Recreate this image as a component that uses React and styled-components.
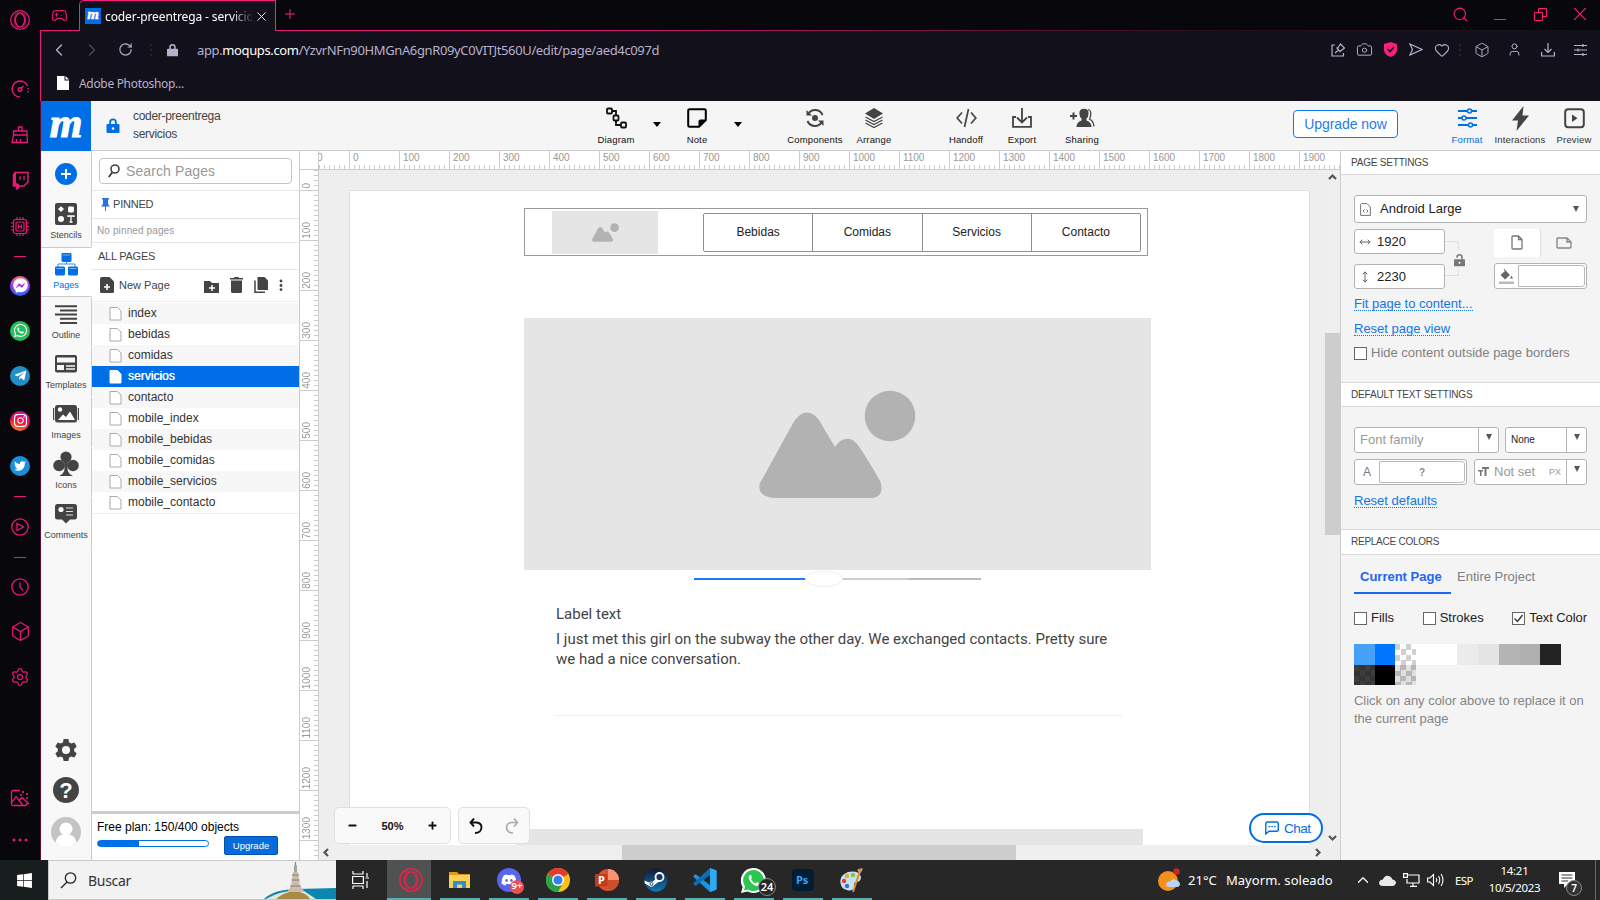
import React from "react";
import styled, { createGlobalStyle, css } from "styled-components";
import {
  Gamepad2, X, Plus, ChevronLeft, ChevronRight, RotateCw, Search, Camera, Heart, Box, User,
  Settings, Minus, MoveHorizontal, MoveVertical, ChevronUp,
} from "lucide-react";
import {
  FaTwitter, FaTelegramPlane, FaInstagram, FaWhatsapp, FaFacebookMessenger, FaDiscord, FaWindows,
} from "react-icons/fa";

const C = {
  pink: "#e8197a",
  hot: "#fa1e7d",
  blue: "#006ee6",
  dark: "#444",
  line: "#ccc",
  lilac: "#b9b0cc",
};

const Global = createGlobalStyle`
  * { box-sizing: border-box; }
  html, body { margin: 0; padding: 0; overflow: hidden; }
  body { font-family: "Liberation Sans", Arial, sans-serif; font-size: 12px; color: #333; }
  svg { display: block; flex: none; }
`;

/* ---------- Desktop and browser ---------- */
const Desktop = styled.div`
  width: 1600px; height: 900px; display: flex; flex-direction: column; overflow: hidden; background: #07070c;
`;
const Browser = styled.div`height: 860px; display: flex;`;
const Rail = styled.div`
  width: 40px; display: flex; flex-direction: column; background: #07070c; color: ${C.pink};
`;
const RailSlot = styled.div`
  height: ${(p) => p.$h}px; margin-top: ${(p) => p.$gap || "0"}; display: flex; align-items: center; justify-content: center;
`;
const Dash = styled.div`width: 12px; height: 1px; background: ${C.pink};`;
const Disc = styled.div`
  width: 20px; height: 20px; border-radius: 50%; background: ${(p) => p.$bg}; color: #fff;
  display: flex; align-items: center; justify-content: center;
`;
const Win = styled.div`width: 1560px; display: flex; flex-direction: column;`;
const TabStrip = styled.div`
  height: 31px; display: flex; align-items: stretch; background: #07070c; color: ${C.hot};
`;
const StripSide = styled.div`
  display: flex; align-items: center; border-bottom: 1px solid ${C.pink};
  ${(p) => (p.$grow ? css`flex: 1; border-image: linear-gradient(to right, #e01b74 0, #e01b74 20%, #2a1020 70%, #14111c 100%) 1;` : css`width: 39px; justify-content: center;`)}
  padding: ${(p) => p.$pad || 0};
`;
const Tab = styled.div`
  width: 197px; display: flex; align-items: center; padding: 0 7px 0 5px; background: #12101a; color: #fff;
  border: 1px solid ${C.hot}; border-bottom: 0; border-top-left-radius: 5px; font-family: "Noto Sans", sans-serif;
`;
const Favicon = styled.div`
  width: 16px; height: 16px; background: ${C.blue}; color: #fff; flex: none;
  font: italic bold 15px/12px "Liberation Serif", serif; text-align: center; -webkit-text-stroke: 0.5px #fff;
`;
const TabTitle = styled.div`
  width: 147px; margin: 1px 2px 0 4px; white-space: nowrap; font-size: 12px; letter-spacing: -0.12px; flex: none;
  mask-image: linear-gradient(to right, #000 125px, transparent 150px);
`;
const WinButtons = styled.div`margin-left: auto; display: flex; align-items: center; height: 30px;`;
const WinBtn = styled.div`width: 40px; display: flex; justify-content: center;`;
const Chrome = styled.div`
  height: 70px; background: #12101a; color: ${C.lilac}; border-left: 1px solid ${C.pink};
  font-family: "Noto Sans", sans-serif;
`;
const AddressRow = styled.div`height: 37px; display: flex; align-items: center; padding-left: 9px;`;
const NavSlot = styled.div`
  width: ${(p) => p.$w || 33}px; display: flex; justify-content: center; opacity: ${(p) => (p.$dim ? 0.35 : 1)};
`;
const Url = styled.div`
  width: 540px; margin-left: 19px; font-size: 13px; letter-spacing: -0.37px; white-space: nowrap; b { font-weight: 400; color: #fff; }
`;
const AddressIcons = styled.div`margin-left: auto; display: flex; align-items: center; padding-right: 3px;`;
const BookmarkRow = styled.div`
  height: 30px; display: flex; align-items: center; padding: 0 0 0 16px; gap: 10px; font-size: 12px; letter-spacing: -0.32px;
`;

/* ---------- Moqups application ---------- */
const AppShell = styled.div`
  height: 759px; display: flex; flex-direction: column; border-left: 1px solid #5a0d33; background: #f5f5f5;
`;
const Header = styled.div`height: 50px; display: flex; background: #f5f5f5;`;
const Logo = styled.div`
  width: 50px; height: 50px; background: ${C.blue}; color: #fff; text-align: center;
  font: italic bold 42px/44px "Liberation Serif", serif; -webkit-text-stroke: 1.1px #fff;
`;
const HeaderBar = styled.div`flex: 1; display: flex; align-items: stretch; border-bottom: 1px solid ${C.line};`;
const LockSlot = styled.div`width: 42px; display: flex; align-items: center; justify-content: center; padding-left: 1px;`;
const DocName = styled.div`width: 100px; padding-top: 6px; line-height: 18px; color: ${C.dark}; letter-spacing: -0.3px; white-space: nowrap;`;
const Tool = styled.div`
  width: ${(p) => p.$w || 50}px; margin-left: ${(p) => p.$ml || 0}px; display: flex; flex-direction: column; align-items: center;
  color: ${(p) => p.$c || "#444"}; font-size: 9.5px; white-space: nowrap;
`;
const ToolIcon = styled.div`height: 34px; display: flex; align-items: center; justify-content: center;`;
const ToolLabel = styled.div`line-height: 10px; color: ${(p) => p.$c || "#111"}; letter-spacing: ${(p) => p.$ls || 0.15}px;`;
const Caret = styled.div`
  width: 8px; height: 0; margin: 21px 0 0 ${(p) => p.$ml}px; border: 4px solid transparent; border-top: 5px solid #000; border-bottom: 0;
`;
const UpgradeNow = styled.div`
  width: 105px; height: 28px; margin: 9px 0 0 186px; border: 1px solid #0a7af5; border-radius: 4px; background: #fff;
  color: #1f7bf0; font-size: 14px; line-height: 27px; text-align: center; white-space: nowrap; letter-spacing: -0.05px;
`;
const Body = styled.div`height: 709px; display: flex;`;

const Toolbox = styled.div`
  width: 51px; background: #f8f8f8; display: flex; flex-direction: column; color: ${C.dark};
`;
const AddSlot = styled.div`
  height: 46px; border-right: 1px solid ${C.line}; display: flex; justify-content: center; align-items: center; padding-bottom: 1px;
`;
const ToolboxItem = styled.div`
  height: 50px; display: flex; flex-direction: column; align-items: center; font-size: 9px; color: ${(p) => (p.$on ? C.blue : "#444")};
  background: ${(p) => (p.$on ? "#fff" : "transparent")};
  border: 1px solid ${(p) => (p.$on ? C.line : "transparent")}; border-left: 0;
  border-right-color: ${(p) => (p.$on ? "#fff" : C.line)};
`;
const ToolboxIcon = styled.div`height: 32px; display: flex; align-items: center; color: ${(p) => (p.$on ? C.blue : C.dark)};`;
const ToolboxLabel = styled.div`line-height: 11px; white-space: nowrap;`;
const ToolboxFoot = styled.div`
  flex: 1; border-right: 1px solid ${C.line}; display: flex; flex-direction: column; justify-content: flex-end; align-items: center;
  padding-bottom: 13px; gap: 14px;
`;
const Help = styled.div`
  width: 26px; height: 26px; margin-top: 2px; border-radius: 50%; background: ${C.dark}; color: #fff; font: bold 22px/27px "Liberation Sans", sans-serif; text-align: center;
`;

const Pages = styled.div`
  width: 208px; background: #fff; border-right: 1px solid ${C.line}; display: flex; flex-direction: column;
`;
const SearchBox = styled.div`
  height: 26px; margin: 7px 7px 6px; border: 1px solid #c4c4c4; border-radius: 4px; display: flex; align-items: center; gap: 6px;
  padding-left: 8px; color: #999; font-size: 14px; letter-spacing: 0.1px;
`;
const Strip = styled.div`
  height: ${(p) => p.$h}px; border-top: 1px solid #e8e8e8; display: flex; align-items: center; padding: 0 0 ${(p) => p.$pb || 0}px ${(p) => p.$pl || 5}px;
  gap: ${(p) => p.$gap || 4}px; font-size: ${(p) => p.$fs || 11}px; color: ${(p) => p.$c || C.dark}; letter-spacing: ${(p) => p.$ls || 0}px; white-space: nowrap;
`;
const PageActions = styled.div`margin-left: auto; display: flex; align-items: center; gap: 11px; padding-right: 16px;`;
const List = styled.div`border-top: 1px solid #eee; border-bottom: 1px solid #eee; padding-top: 1px;`;
const PageRow = styled.div`
  height: 21px; display: flex; align-items: center; gap: 6px; padding-left: 17px; padding-bottom: 1px;
  background: ${(p) => (p.$on ? C.blue : p.$odd ? "#f7f7f7" : "#fff")}; color: ${(p) => (p.$on ? "#fff" : "#333")};
  ${(p) => p.$on && css`text-shadow: 0.3px 0 #fff;`}
`;
const Plan = styled.div`
  height: 49px; margin-top: auto; border-top: 3px solid ${C.line}; padding: 6px 0 0 5px; color: #000; white-space: nowrap; line-height: 14px;
`;
const PlanRow = styled.div`display: flex; padding-right: 21px; justify-content: space-between;`;
const Meter = styled.div`
  width: 112px; height: 7px; margin-top: 6px; border: 1px solid ${C.blue}; border-radius: 4px;
  background: linear-gradient(to right, ${C.blue} 41px, #fff 41px);
`;
const UpgradeBtn = styled.div`
  width: 54px; height: 19px; margin-top: 2px; background: #066cdc; border: 1px solid #0552a8; border-radius: 2px; color: #fff; font-size: 9.5px;
  line-height: 18px; text-align: center;
`;

/* ---------- Canvas ---------- */
const Stage = styled.div`width: 1040px; display: flex; flex-direction: column; background: #eee;`;
const RulerRow = styled.div`height: 19px; display: flex; background: #fff; border-bottom: 1px solid ${C.line};`;
const Corner = styled.div`width: 19px; border-right: 1px solid ${C.line}; flex: none;`;
const HRuler = styled.div`flex: 1; display: flex; overflow: hidden; color: #999; font-size: 10px;`;
const HCell = styled.div`
  width: ${(p) => (p.$lead ? 30 : 50)}px; flex: none; padding-left: ${(p) => (p.$lead ? 0 : 4)}px; line-height: 14px; letter-spacing: -0.1px;
  box-shadow: ${(p) => (p.$lead ? "none" : "inset 1px 0 #ccc")};
  text-indent: ${(p) => (p.$lead ? -2 : 0)}px;
  background: repeating-linear-gradient(to right, #ccc 0 1px, transparent 1px 5px) bottom / 100% 4px no-repeat;
`;
const StageBody = styled.div`height: 690px; display: flex;`;
const VRuler = styled.div`width: 19px; flex: none; border-right: 1px solid ${C.line}; background: #fff; overflow: hidden;`;
const VCell = styled.div`
  height: ${(p) => (p.$lead ? 21 : 50)}px; display: flex; align-items: flex-end; padding: 0 0 2px 1px; color: #999; font-size: 10px;
  box-shadow: inset 0 -1px #ccc;
  background: repeating-linear-gradient(to top, #ccc 0 1px, transparent 1px 5px) right / 4px 100% no-repeat;
`;
const VLabel = styled.span`writing-mode: vertical-rl; transform: rotate(180deg); line-height: 12px;`;
const ViewCol = styled.div`width: 1006px; display: flex; flex-direction: column; flex: none;`;
const View = styled.div`height: 675px; position: relative; overflow: hidden; background: #eee;`;
const Item = styled.div`
  position: absolute; left: ${(p) => p.$x - 319}px; top: ${(p) => p.$y - 170}px; width: ${(p) => p.$w}px; height: ${(p) => p.$h}px;
`;
const Paper = styled(Item)`background: #fff; border: 1px solid #e0e0e0; border-bottom: 0;`;
const Frame = styled(Item)`border: 1px solid #9a9a9a;`;
const Filled = styled(Item)`background: ${(p) => p.$bg || "#e5e5e5"}; display: flex;`;
const NavGroup = styled(Item)`display: flex; border: 1px solid #8f8f8f; border-radius: 2px;`;
const NavCell = styled.div`
  flex: 1; display: flex; align-items: center; justify-content: center; padding-bottom: 2px; color: #222;
  & + & { border-left: 1px solid #8f8f8f; }
`;
const Copyable = styled(Item)`
  font-family: Roboto, sans-serif; font-size: 15px; line-height: 20px; color: #444; white-space: nowrap;
`;
const Thumb = styled(Item)`background: #fff; border: 1px solid #eee; border-radius: 50%;`;
const Floater = styled(Item)`
  background: #f9f9f9; border: 1px solid #e0e0e0; border-radius: 5px; display: flex; align-items: center; justify-content: space-between;
  padding: 0 ${(p) => p.$pad}px; color: #111; font-size: 11px; font-weight: bold;
`;
const Chat = styled(Item)`
  border: 2px solid ${C.blue}; border-radius: 15px; background: #fff; color: ${C.blue}; font-size: 13.5px; display: flex; align-items: center;
  gap: 5px; padding-left: 14px; letter-spacing: -0.5px;
`;
const HScroll = styled.div`height: 15px; display: flex; align-items: center; justify-content: space-between; padding: 0 3px 0 3px; background: linear-gradient(to right, #efefef 303px, #cdcdcd 303px 697px, #efefef 697px); color: #555;`;
const VScroll = styled.div`
  width: 15px; height: 675px; display: flex; flex-direction: column; justify-content: space-between; align-items: center; padding: 3px 0 3px;
  color: #555; background: linear-gradient(to bottom, #efefef 163px, #cdcdcd 163px 365px, #efefef 365px);
`;

/* ---------- Settings panel ---------- */
const Panel = styled.div`width: 260px; flex: none; border-left: 1px solid ${C.line}; background: #f4f4f4; display: flex; flex-direction: column; white-space: nowrap;`;
const PanelHead = styled.div`
  height: ${(p) => p.$h}px; padding: 0 0 ${(p) => p.$pb || 0}px 10px; display: flex; align-items: center; background: #fff; border-bottom: 1px solid #d9d9d9;
  border-top: ${(p) => (p.$top ? "1px solid #d9d9d9" : "0")}; color: ${C.dark}; font-size: 10px; letter-spacing: ${(p) => p.$ls || -0.2}px;
`;
const PanelBody = styled.div`height: ${(p) => p.$h}px; padding: 20px 13px 0;`;
const Field = styled.div`
  width: ${(p) => p.$w}px; height: ${(p) => p.$h || 26}px; border: 1px solid #b3b3b3; border-radius: 3px; background: #fff; display: flex;
  align-items: center; font-size: 13px; color: ${(p) => p.$c || "#222"}; padding-left: ${(p) => p.$pl || 0}px; gap: ${(p) => p.$gap || 0}px;
`;
const FieldText = styled.span`flex: ${(p) => (p.$fixed ? "none" : 1)}; font-size: ${(p) => p.$fs || 13}px; margin-top: -1px;`;
const Drop = styled.div`
  width: 20px; align-self: stretch; display: flex; justify-content: center; padding-top: ${(p) => p.$pt || 7}px;
  border-left: ${(p) => (p.$bare ? "0" : "1px solid #b3b3b3")};
  &::after { content: ""; width: 0; height: 0; border: 3.5px solid transparent; border-top: 6px solid #555; border-bottom: 0; }
`;
const SizeGrid = styled.div`display: flex; margin-top: 6px;`;
const Stack = styled.div`display: flex; flex-direction: column; gap: ${(p) => p.$gap}px;`;
const LinkCol = styled.div`width: 49px; padding-top: 12px;`;
const Orient = styled.div`width: 93px; height: 28px; display: flex;`;
const OrientBtn = styled.div`
  width: 47px; display: flex; align-items: center; justify-content: center; padding-bottom: 1px; background: ${(p) => (p.$on ? "#fff" : "transparent")};
  border-right: ${(p) => (p.$on ? "1px solid #ddd" : "0")};
`;
const Inner = styled.div`
  flex: 1; height: 22px; margin: 0 1px 0 0; border: 1px solid #bbb; border-radius: 0 3px 3px 0; text-align: center; line-height: 22px; font-size: 10px; font-weight: bold; color: #888;
`;
const Link = styled.div`
  width: max-content; margin-top: ${(p) => p.$mt}px; height: 14px; line-height: 14px; font-size: 13px; color: #1274e6; border-bottom: 1px dotted #1274e6;
`;
const CheckRow = styled.div`display: flex; justify-content: space-between; margin-top: ${(p) => p.$mt}px;`;
const Check = styled.div`
  display: flex; gap: 4px; height: 13px; line-height: 11px; font-size: 13px; color: ${(p) => p.$c || "#222"}; letter-spacing: ${(p) => p.$ls || 0}px;
`;
const BoxMark = styled.div`width: 13px; height: 13px; border: 1px solid #666; background: #fff; flex: none;`;
const FieldRow = styled.div`display: flex; justify-content: space-between; margin-top: ${(p) => p.$mt || 0}px;`;
const Tabs = styled.div`display: flex; height: 31px; margin: -12px 0 1px;`;
const PTab = styled.div`
  padding: 0 6px; line-height: 28px; font-size: 13px; color: ${(p) => (p.$on ? "#1a66f5" : "#808080")};
  font-weight: ${(p) => (p.$on ? 700 : 400)}; width: ${(p) => (p.$on ? 97 : 95)}px; border-bottom: 2px solid ${(p) => (p.$on ? "#1a66f5" : "transparent")};
`;
const Swatches = styled.div`display: flex; flex-wrap: wrap; width: 207px; margin-top: 19px;`;
const Swatch = styled.div`
  width: 20.7px; height: ${(p) => p.$h || 21}px; background: ${(p) => p.$bg};
  ${(p) => p.$chk && css`background: repeating-conic-gradient(${p.$chk[0]} 0 25%, ${p.$chk[1]} 0 50%) 0 0 / 11px 11px;`}
`;
const Hint = styled.div`margin-top: 7px; font-size: 13px; line-height: 18px; color: #858585; letter-spacing: -0.02px;`;

/* ---------- Taskbar ---------- */
const Taskbar = styled.div`
  height: 40px; display: flex; align-items: stretch; background: #272727; color: #fff; font-family: "Noto Sans", sans-serif; white-space: nowrap;
`;
const Start = styled.div`width: 48px; background: #181d1e; display: flex; align-items: center; justify-content: center;`;
const SearchBar = styled.div`
  width: 288px; display: flex; align-items: center; background: #f2f2f2; border: 1px solid #c8c8c8; border-right: 0; color: #333; padding-left: 11px;
  gap: 12px;
`;
const SearchText = styled.span`flex: 1; font-size: 14px; letter-spacing: -0.3px; margin-left: -1px;`;
const TaskView = styled.div`width: 51px; display: flex; align-items: center; justify-content: center; padding-right: 3px;`;
const TaskApp = styled.div`
  width: 49px; position: relative; display: flex; align-items: center; justify-content: center; padding-right: 2px;
  &::before { content: ""; position: absolute; top: 0; bottom: 0; left: 0; right: 5px; background: ${(p) => (p.$on ? "#505151" : "transparent")}; }
  &::after { content: ""; position: absolute; bottom: 0; height: 2px; left: ${(p) => (p.$on ? 0 : 4)}px; right: 5px; background: #56b0b3; }
  svg { position: relative; z-index: 1; }
`;
const Badge = styled.div`
  position: absolute; z-index: 2; right: ${(p) => p.$r}px; bottom: ${(p) => p.$b}px; min-width: ${(p) => p.$s}px; height: ${(p) => p.$s}px; padding: 0 1px; border-radius: 10px;
  background: ${(p) => p.$bg}; border: ${(p) => (p.$ring ? "1px solid #888" : "0")}; font-size: ${(p) => p.$fs}px; line-height: ${(p) => p.$s - 2}px; text-align: center; font-weight: 600;
`;
const Tray = styled.div`margin-left: auto; display: flex; align-items: center; font-size: 13px;`;
const TraySlot = styled.div`width: ${(p) => p.$w}px; display: flex; justify-content: center; font-size: 11.5px; letter-spacing: ${(p) => p.$ls || 0}px;`;
const Notice = styled.div`
  width: 52px; height: 40px; padding: 12px 0 0 11px; position: relative;
  &::after { content: ""; position: absolute; right: 4px; top: 0; bottom: 0; width: 1px; background: #666; }
`;
const Weather = styled.div`width: 171px; padding-left: 8px; display: flex; gap: 9px; letter-spacing: 0.06px;`;
const ClockText = styled.div`width: 67px; text-align: center; font-size: 11.5px; line-height: 17px; letter-spacing: -0.32px; padding-bottom: 2px;`;

/* ---------- Drawings ---------- */
const Svg = ({ w, h, vb, children, ...r }) => (
  <svg width={w} height={h || w} viewBox={vb || `0 0 ${w} ${h || w}`} fill="none" stroke="none" {...r}>{children}</svg>
);
const mountainPath = "M1 93C-2 102 5 108 17 108H112C121 108 125 101 121 91C114 78 104 62 98 54C92 46 82 47 76 57L64 37C55 18 42 18 33 35Z";
const Mountains = ({ w, h }) => (
  <Svg w={w} h={h} vb="0 0 157 108">
    <path fill="#b2b2b2" d={mountainPath} />
    <circle cx="131" cy="26" r="25.3" fill="#b2b2b2" />
  </Svg>
);
const Opera = ({ s = 20, c = C.pink }) => (
  <Svg w={s} vb="0 0 20 20" stroke={c} strokeWidth="1.3"><circle cx="10" cy="10" r="9.3" /><ellipse cx="10" cy="10" rx="4.6" ry="7" /><path d="M8 2.3C3 4 3 16 8 17.7M12 2.3C17 4 17 16 12 17.7" strokeWidth=".8" /></Svg>
);
const Lock = ({ w, h, c, hole }) => (
  <Svg w={w} h={h} vb="0 0 13 15"><path d="M3.6 7V4.2a2.9 2.9 0 0 1 5.8 0V7" stroke={c} strokeWidth="1.8" /><rect y="6" width="13" height="9" rx="1" fill={c} />{hole && <circle cx="6.5" cy="10.5" r="1.3" fill={hole} />}</Svg>
);
const Doc = ({ fill = "#fff", stroke = "#aaa" }) => (
  <Svg w={13} h={15}><path d="M1 1.5H8.5L12 5V14H1Z" fill={fill} stroke={stroke} /></Svg>
);
const Chev = ({ d }) => <Svg w={9} stroke="#555" strokeWidth="2.2"><path d={d} /></Svg>;

const stencils = <Svg w={22}><rect width="22" height="22" rx="2" fill="#444" /><path d="M6 3.2 9 6 6 9 3 6Z" fill="#fff" /><rect x="13" y="3.5" width="6" height="6" rx="1.4" fill="#fff" /><circle cx="6" cy="16" r="3" fill="#fff" /><path d="M13 14V13H19V14M16 13V19M14.5 19H17.5" stroke="#fff" strokeWidth="1.3" /></Svg>;
const tree = <Svg w={23} h={24}><g fill={C.blue}><path d="M11.5 9.5V12H3V15M11.5 12H20V15" stroke={C.blue} strokeWidth=".8" fill="none" /><rect x="6.5" y="1" width="10" height="9" rx="1.4" /><rect y="14.5" width="10" height="9" rx="1.4" /><rect x="13" y="14.5" width="10" height="9" rx="1.4" /></g><path d="M8 3H15M1.5 16.5H8.5M14.5 16.5H21.5" stroke="#7bb4f3" /></Svg>;
const outline = <Svg w={22} h={19} stroke="#444" strokeWidth="2"><path d="M0 1.2H22M5 5.4H22M0 9.6H22M5 13.8H22M5 18H22" /></Svg>;
const templates = <Svg w={22} h={18}><rect width="22" height="17.5" rx="2" fill="#444" /><rect x="2" y="2.5" width="18" height="5" fill="#f8f8f8" /><rect x="2" y="10" width="7" height="5" fill="#f8f8f8" /><path d="M11 11H20M11 14H20" stroke="#f8f8f8" strokeWidth="1.5" /></Svg>;
const images = <Svg w={26} h={18}><rect x="2" width="22" height="17.5" rx="2.5" fill="#444" /><path d="M.6 3V15M25.4 3V15" stroke="#444" strokeWidth="1.2" /><circle cx="7" cy="4.5" r="2.2" fill="#fff" /><path d="M5 15 10 9.5 13 12 17 6.5 22 15Z" fill="#fff" /></Svg>;
const club = <Svg w={26} h={26}><g fill="#444"><circle cx="13" cy="6" r="5.6" /><circle cx="6" cy="14.5" r="5.8" /><circle cx="20" cy="14.5" r="5.8" /><path d="M11 9H15L14.5 18Q15 23 20 25H6Q11 23 11.5 18Z" /></g></Svg>;
const comments = <Svg w={22} h={20}><path d="M2.5 0H19.5Q22 0 22 2.5V13Q22 15.5 19.5 15.5H15L11 19.5 7 15.5H2.5Q0 15.5 0 13V2.5Q0 0 2.5 0Z" fill="#444" /><circle cx="6" cy="5.5" r="2.6" fill="#fff" /><path d="M11 4H18M11 7.5H18M11 11H18" stroke="#ddd" strokeWidth="1.2" /></Svg>;
const gear = (s, c, hole) => <Svg w={s} vb="0 0 22 22"><path fill={c} d="M8.6 0H13.4L14 3.2 16.2 4.5 19.3 3.4 21.7 7.5 19.2 9.7V12.3L21.7 14.5 19.3 18.6 16.2 17.5 14 18.8 13.4 22H8.6L8 18.8 5.8 17.5 2.7 18.6.3 14.5 2.8 12.3V9.7L.3 7.5 2.7 3.4 5.8 4.5 8 3.2Z" /><circle cx="11" cy="11" r="4" fill={hole} /></Svg>;

const diagram = <Svg w={21} h={22} stroke="#111" strokeWidth="1.8"><path d="M6 4H10V8M10 14V18H15" /><rect x="1" y="1.5" width="5" height="5" rx="1" fill="#f5f5f5" /><rect x="7.5" y="8.5" width="5" height="5" rx="1" fill="#f5f5f5" /><rect x="15" y="15.5" width="5" height="5" rx="1" fill="#f5f5f5" /></Svg>;
const note = <Svg w={20}><path d="M2.5 1.2H17.5Q18.8 1.2 18.8 2.5V12L12 18.8H2.5Q1.2 18.8 1.2 17.5V2.5Q1.2 1.2 2.5 1.2Z" stroke="#000" strokeWidth="2" /><path d="M18.8 11.5H13.5Q11.5 11.5 11.5 13.5V18.8Z" fill="#000" /></Svg>;
const components = <Svg w={20} stroke="#444" strokeWidth="2"><path d="M3.5 5.5A8 8 0 0 1 17.5 7M16.5 14.5A8 8 0 0 1 2.5 13" /><path d="M1.5 2V7.5H7ZM18.5 18V12.5H13Z" fill="#444" stroke="none" /><circle cx="10" cy="10" r="3" fill="#444" stroke="none" /></Svg>;
const arrange = <Svg w={20}><path d="M10 0 19 5.5 10 11 1 5.5Z" fill="#444" /><path d="M1.5 9 10 13.5 18.5 9M1.5 12 10 16.5 18.5 12M1.5 15 10 19.5 18.5 15" stroke="#444" strokeWidth="1.3" /></Svg>;
const handoff = <Svg w={21} h={20} stroke="#444" strokeWidth="1.7"><path d="M6 4.5 1.2 10 6 15.5M15 4.5 19.8 10 15 15.5M12.5 1 8.5 19" /></Svg>;
const exportI = <Svg w={20} stroke="#444" strokeWidth="1.8"><path d="M5 9.5 10 14.5 15 9.5M10 0V14" /><path d="M4 9H1V18.8H19V9H16" /></Svg>;
const sharing = <Svg w={25} h={20}><path d="M0 8H7M3.5 4.5V11.5" stroke="#444" strokeWidth="2" /><path d="M14 .8Q18.8.8 18.6 5.500 18.500 9 16.500 10.500V12.500Q21.500 14 21.500 19H6.500Q6.500 14 11.500 12.500V10.500Q9.500 9 9.400 5.500 9.200.8 14 .8Z" fill="#444" /><path d="M18 1.5Q21.200 2.500 20.8 6 20.500 9 19.5 11 23.5 13 24 18.5" stroke="#444" strokeWidth="1.3" /></Svg>;
const format = <Svg w={19} h={20} stroke={C.blue} strokeWidth="2.2"><path d="M0 3H19M0 10H19M0 17H19" /><g fill="#f5f5f5" strokeWidth="1.5"><circle cx="11.5" cy="3" r="2" /><circle cx="6" cy="10" r="2" /><circle cx="12.5" cy="17" r="2" /></g></Svg>;
const bolt = <Svg w={17} h={25}><path d="M11.5 0 0 14.5H6L4.5 25 17 9.5H10.5Z" fill="#444" /></Svg>;
const preview = <Svg w={21}><rect x="1.2" y="1.2" width="18.6" height="18" rx="3" stroke="#444" strokeWidth="2" /><path d="M8 6.5 13.5 10.2 8 14Z" fill="#444" /></Svg>;

const brush = <Svg w={18} h={19} stroke={C.pink} strokeWidth="1.3"><path d="M7.5 6V2H11V6M2.5 6H16V10H2.5ZM2.5 10 1 17.5H16.5L16 10M5.5 14V17.5M9.5 14V17.5" /></Svg>;
const gauge = <Svg w={18} stroke={C.pink} strokeWidth="1.4"><path d="M9 17A8 8 0 1 1 16.5 6" /><path d="M17 8V14" strokeDasharray="1.5 1.5" /><circle cx="9" cy="9.5" r="1.8" /><path d="M10 8.5 12.5 6" /></Svg>;
const twitch = <Svg w={17} h={19}><path d="M3 1.5H16V11L12 15H8L5 18V15H1.5V4Z" stroke={C.pink} strokeWidth="1.5" fill="none" /><path d="M1 4 4 1V12L7 13V17L4.5 18V15H1Z" fill={C.pink} /><path d="M8 5V9M12 5V9" stroke={C.pink} strokeWidth="1.3" /></Svg>;
const chip = <Svg w={18} h={19} stroke={C.pink} strokeWidth="1.2"><rect x="2.5" y="2.5" width="13" height="14" rx="2" /><rect x="5" y="5" width="8" height="9" rx="1" /><path d="M7.5 7.5V11.5M10.5 7.5V11.5M7.5 9.5H10.5M6 0V2.5M9 0V2.5M12 0V2.5M6 16.5V19M9 16.5V19M12 16.5V19M0 6H2.5M0 9.5H2.5M0 13H2.5M15.5 6H18M15.5 9.5H18M15.5 13H18" /></Svg>;
const picture = <Svg w={20} h={18} stroke={C.pink} strokeWidth="1.3"><path d="M10 1.5H3Q1.5 1.5 1.5 3V15Q1.5 16.5 3 16.5H15Q17 16.5 17 14.5V12M1.5 14 6 7.5 13 16.5M9.5 11 12 8.5 19 15M12 3H14M13 2V4M16 5H18M17 4V6M10 6H12M16 9H18" /></Svg>;

const flag = <Svg w={14} h={14} stroke={C.lilac} strokeWidth="1.2"><path d="M4 2H1V13H12.5V10M4 10 7 7.5M5.5 4.5 9.5 9M6.5 5.5 9.5 1 13.5 5 9.5 8" /></Svg>;
const shield = <Svg w={13} h={15}><path d="M6.5 0 13 2V8Q13 12.5 6.5 15 0 12.5 0 8V2Z" fill={C.hot} /><path d="M3.5 7 6 9.5 10 5" stroke="#12101a" strokeWidth="1.6" /></Svg>;
const send = <Svg w={14} h={13} stroke={C.lilac} strokeWidth="1.2"><path d="M1 1 13 6.5 1 12 3.5 6.5Z" /></Svg>;
const download = <Svg w={14} stroke={C.lilac} strokeWidth="1.2"><path d="M7 0V9M3.5 6 7 9.5 10.5 6M.6 9V13H13.4V9" /></Svg>;
const sliders = <Svg w={13} h={12} stroke={C.lilac} strokeWidth="1.2"><path d="M0 1.5H13M0 6H13M0 10.5H13M9 0V3M4 4.5V7.5M9 9V12" /></Svg>;

const folder = <Svg w={21} h={20}><path d="M0 2H8L10 4H21V9H0Z" fill="#e39a12" /><rect y="5" width="21" height="13" fill="#fbcf51" /><path d="M4 18V11H17V18H13V14.5H8V18Z" fill="#2a8fd8" /></Svg>;
const chromeI = <Svg w={24}><circle cx="12" cy="12" r="12" fill="#fbc116" /><path d="M12 12 1.6 6A12 12 0 0 1 22.4 6Z" fill="#e33b2e" /><path d="M1.6 6A12 12 0 0 0 12 24L17 15 12 12Z" fill="#2ba24c" /><circle cx="12" cy="12" r="6" fill="#fff" /><circle cx="12" cy="12" r="4.6" fill="#3a7df0" /></Svg>;
const ppt = <Svg w={24}><circle cx="13" cy="12" r="11" fill="#d8532f" /><path d="M13 1A11 11 0 0 1 24 12H13Z" fill="#fd9271" /><path d="M24 12A11 11 0 0 1 13 23V12Z" fill="#c9502c" /><rect y="6" width="12.5" height="12.5" rx="1" fill="#c33b1b" /><text x="3" y="16" fill="#fff" fontSize="11" fontWeight="700" fontFamily="Noto Sans">P</text></Svg>;
const steam = <Svg w={24}><defs><linearGradient id="steam" x1="0" y1="0" x2="0" y2="1"><stop offset="0" stopColor="#10193c" /><stop offset="1" stopColor="#1478b0" /></linearGradient></defs><circle cx="12" cy="12" r="11.5" fill="url(#steam)" /><path d="M.500 12.500 7 15.500 12.500 10 16 13 9.500 17.500 6.500 18.500.800 15.500Z" fill="#fff" /><circle cx="15.5" cy="9" r="4" fill="#1b3560" stroke="#fff" strokeWidth="1.8" /><circle cx="7.500" cy="16" r="2.600" fill="#fff" /><circle cx="7.500" cy="16" r="1.500" stroke="#1b4a7c" /></Svg>;
const vscode = <Svg w={25} h={24}><path d="M18 0 24.5 2.5V21.5L18 24 1 8.5 3.5 6 18 17Z" fill="#1a93dc" /><path d="M18 7 3.5 18 1 15.5 18 0Z" fill="#0a6fb8" /><path d="M18 0 24.5 2.5V21.5L18 24Z" fill="#2fa9f2" /></Svg>;
const ps = <Svg w={22} h={22}><rect width="22" height="22" rx="4" fill="#001d34" /><text x="4" y="15" fill="#35a7fb" fontSize="11" fontWeight="700" fontFamily="Noto Sans">Ps</text></Svg>;
const paint = <Svg w={25} h={25}><path d="M2 17Q-1 8 9 4 20 2 22 9 22 14 17 14 14 15 16 19 13 24 8 22 3 21 2 17Z" fill="#c5e2f0" /><circle cx="5" cy="13" r="2.2" fill="#d8433c" /><circle cx="8" cy="8" r="2.2" fill="#f0a628" /><circle cx="14" cy="7" r="2.2" fill="#8fc14a" /><circle cx="8" cy="18" r="2.2" fill="#3a72c8" /><path d="M21 3 14 24" stroke="#e08a2e" strokeWidth="2" /><path d="M18 2Q22-1 24 1L21 6Z" fill="#c99a62" /></Svg>;
const tower = <Svg w={72} h={38}><path d="M0 38Q10 28 34 28L72 27V38Z" fill="#0d87ad" /><path d="M2 38Q18 28 40 30L52 38Z" fill="#dfe8e0" /><path d="M12 38Q20 31 30 30 42 31 46 38Z" fill="#a88a45" /><path d="M29 11H34L36 25 41 31H23L27 25Z" fill="#cbbcae" /><path d="M31.5 1V9M28 14H35M27.5 19H35.5M26 25H37" stroke="#8a7a70" strokeWidth="1.1" /><path d="M30 4H33V11H30Z" fill="#9bab9a" /></Svg>;
const cube = (c, s) => <Box size={s} color={c} strokeWidth={1.4} />;

const railItems = [
  [40, <Opera />], [44, gauge, "27px"], [46, brush], [46, twitch], [46, chip], [14, <Dash />],
  [45, <Disc $bg="linear-gradient(to top, #1a6cff, #a033ff 50%, #ff6a6a)"><FaFacebookMessenger size={15} color="#fff" /></Disc>],
  [45, <Disc $bg="#22bf5b"><FaWhatsapp size={15} /></Disc>],
  [45, <Disc $bg="#2190c8"><FaTelegramPlane size={13} /></Disc>],
  [45, <Disc $bg="linear-gradient(20deg, #fb9a1c, #f2143e 45%, #b40fc8)"><FaInstagram size={15} /></Disc>],
  [45, <Disc $bg="#1a8fdc"><FaTwitter size={12} /></Disc>],
  [16, <Dash />],
  [46, <Svg w={18} stroke={C.pink} strokeWidth="1.3"><circle cx="9" cy="9" r="8.2" /><path d="M6 5.5 12.5 9 6 12.5Z" /></Svg>],
  [14, <Dash />],
  [45, <Svg w={18} stroke={C.pink} strokeWidth="1.3"><circle cx="9" cy="9" r="8.2" /><path d="M9 4.5V9L12 12.5" /></Svg>],
  [45, cube(C.pink, 21)], [45, <Settings size={20} strokeWidth={1.5} />],
  [44, picture, "auto"],
  [40, <Svg w={16} h={4}><circle cx="2" cy="2" r="1.5" fill={C.pink} /><circle cx="8" cy="2" r="1.5" fill={C.pink} /><circle cx="14" cy="2" r="1.5" fill={C.pink} /></Svg>],
];
const toolbox = [
  ["Stencils", stencils], ["Pages", tree, true], ["Outline", outline], ["Templates", templates], ["Images", images], ["Icons", club], ["Comments", comments],
];
const pages = ["index", "bebidas", "comidas", "servicios", "contacto", "mobile_index", "mobile_bebidas", "mobile_comidas", "mobile_servicios", "mobile_contacto"];
const hTicks = Array.from({ length: 20 }, (_, i) => i * 100);
const vTicks = Array.from({ length: 13 }, (_, i) => (i + 1) * 100);
const swatches = [
  { $bg: "#45a0f8" }, { $bg: "#0075ff" }, { $chk: ["#fff", "#d0d0d0"] }, { $bg: "#fff" }, { $bg: "#fff" }, { $bg: "#ebebeb" }, { $bg: "#e4e4e4" },
  { $bg: "#b4b4b4" }, { $bg: "#b0b0b0" }, { $bg: "#222" }, { $chk: ["#333", "#3d3d3d"] }, { $bg: "#000" }, { $chk: ["#b8b8b8", "#e0e0e0"] },
];

function BrowserTop() {
  return (
    <>
      <TabStrip>
        <StripSide><Gamepad2 size={17} strokeWidth={1.6} color={C.pink} /></StripSide>
        <Tab>
          <Favicon>m</Favicon><TabTitle>coder-preentrega - servicio</TabTitle><X size={15} strokeWidth={1.6} color="#e8e8ee" />
        </Tab>
        <StripSide $grow $pad="0 0 2px 6px">
          <Plus size={16} strokeWidth={1.5} />
          <WinButtons>
            <WinBtn><Search size={17} strokeWidth={1.5} /></WinBtn>
            <WinBtn><Svg w={12}><path d="M0 11.5H12" stroke={C.hot} /></Svg></WinBtn>
            <WinBtn><Svg w={13} stroke={C.hot}><path d="M.5 4.5H8.5V12.5H.5ZM4.5 4.5V.5H12.5V8.5H8.5" /></Svg></WinBtn>
            <WinBtn><Svg w={12} stroke={C.hot} strokeWidth="1.2"><path d="M0 0 12 12M12 0 0 12" /></Svg></WinBtn>
          </WinButtons>
        </StripSide>
      </TabStrip>
      <Chrome>
        <AddressRow>
          <NavSlot $w={17}><ChevronLeft size={20} strokeWidth={1.6} /></NavSlot>
          <NavSlot $w={49} $dim><ChevronRight size={20} strokeWidth={1.6} /></NavSlot>
          <NavSlot $w={18}><RotateCw size={15} strokeWidth={1.8} /></NavSlot>
          <NavSlot $w={33}><Svg w={2} h={12} stroke="#3a3648"><path d="M1 0V12" strokeDasharray="2 3" /></Svg></NavSlot>
          <Lock w={11} h={14} c={C.lilac} />
          <Url>app.<b>moqups.com</b>/YzvrNFn90HMGnA6gnR09yC0VITJt560U/edit/page/aed4c097d</Url>
          <AddressIcons>
            <NavSlot $w={26}>{flag}</NavSlot>
            <NavSlot $w={26}><Camera size={17} strokeWidth={1.4} /></NavSlot>
            <NavSlot $w={26}>{shield}</NavSlot>
            <NavSlot $w={26}>{send}</NavSlot>
            <NavSlot $w={26}><Heart size={16} strokeWidth={1.6} /></NavSlot>
            <NavSlot $w={10}><Svg w={2} h={12} stroke="#3a3648"><path d="M1 0V12" strokeDasharray="2 3" /></Svg></NavSlot>
            <NavSlot $w={33}>{cube(C.lilac, 16)}</NavSlot>
            <NavSlot $w={33}><User size={15} strokeWidth={1.6} /></NavSlot>
            <NavSlot $w={33}>{download}</NavSlot>
            <NavSlot $w={33}>{sliders}</NavSlot>
          </AddressIcons>
        </AddressRow>
        <BookmarkRow>
          <Svg w={12} h={14}><path d="M0 0H7.5V4.5H12V14H0Z M8.5 0 12 3.5H8.5Z" fill="#fff" /></Svg>Adobe Photoshop...
        </BookmarkRow>
      </Chrome>
    </>
  );
}

function AppHeader() {
  return (
    <Header>
      <Logo>m</Logo>
      <HeaderBar>
        <LockSlot><Lock w={14} h={15} c={C.blue} hole="#fff" /></LockSlot>
        <DocName>coder-preentrega<br />servicios</DocName>
        <Tool $w={40} $ml={363}><ToolIcon>{diagram}</ToolIcon><ToolLabel>Diagram</ToolLabel></Tool>
        <Caret $ml={17} />
        <Tool $w={40} $ml={16}><ToolIcon>{note}</ToolIcon><ToolLabel>Note</ToolLabel></Tool>
        <Caret $ml={17} />
        <Tool $w={60} $ml={43}><ToolIcon>{components}</ToolIcon><ToolLabel>Components</ToolLabel></Tool>
        <Tool $ml={4}><ToolIcon>{arrange}</ToolIcon><ToolLabel>Arrange</ToolLabel></Tool>
        <Tool $ml={42}><ToolIcon>{handoff}</ToolIcon><ToolLabel>Handoff</ToolLabel></Tool>
        <Tool $ml={6}><ToolIcon>{exportI}</ToolIcon><ToolLabel>Export</ToolLabel></Tool>
        <Tool $ml={10}><ToolIcon>{sharing}</ToolIcon><ToolLabel>Sharing</ToolLabel></Tool>
        <UpgradeNow>Upgrade now</UpgradeNow>
        <Tool $ml={44}><ToolIcon>{format}</ToolIcon><ToolLabel $c={C.blue}>Format</ToolLabel></Tool>
        <Tool $w={56}><ToolIcon>{bolt}</ToolIcon><ToolLabel $c="#333">Interactions</ToolLabel></Tool>
        <Tool $ml={1}><ToolIcon>{preview}</ToolIcon><ToolLabel $c="#333">Preview</ToolLabel></Tool>
      </HeaderBar>
    </Header>
  );
}

function PagesPanel() {
  return (
    <Pages>
      <SearchBox><Svg w={12} h={14} stroke="#444" strokeWidth="1.6"><circle cx="7" cy="5" r="4" /><path d="M4.5 8 .8 13" strokeWidth="2" /></Svg>Search Pages</SearchBox>
      <Strip $h={28} $pl={9} $pb={1} $gap={3} $ls={-0.2}><Svg w={9} h={13}><path d="M1 0H8V1.5H7V6L9 8.5H0L2 6V1.5H1ZM4 8H5V13H4Z" fill="#2f6fe0" /></Svg>PINNED</Strip>
      <Strip $h={24} $fs={10} $c="#999" $ls={0.12}>No pinned pages</Strip>
      <Strip $h={27} $pl={6} $ls={-0.25}>ALL PAGES</Strip>
      <Strip $h={32} $pl={8} $pb={2} $gap={5}>
        <Svg w={14} h={16}><path d="M2 0H9.5L14 4.5V14.5Q14 16 12.5 16H1.5Q0 16 0 14.5V1.5Q0 0 2 0Z" fill="#444" /><path d="M7 7V13M4 10H10" stroke="#fff" strokeWidth="1.6" /></Svg>
        New Page
        <PageActions>
          <Svg w={15} h={16}><path d="M0 4H6L8 6H15V16H0Z" fill="#444" /><path d="M8 8V14M5 11H11" stroke="#fff" strokeWidth="1.5" /></Svg>
          <Svg w={13} h={16}><path d="M0 1H4L4.5 0H8.5L9 1H13V2.5H0ZM1 3.5H12V14.5Q12 16 10.5 16H2.5Q1 16 1 14.5Z" fill="#444" /></Svg>
          <Svg w={14} h={16}><path d="M4 0H10.5L14 3.5V13H4.5Q3.5 13 3.5 12V.5Z" fill="#444" /><path d="M1 3.5V15.2H11" stroke="#444" strokeWidth="1.5" /></Svg>
          <Svg w={4} h={13}><circle cx="2" cy="3" r="1.4" fill="#444" /><circle cx="2" cy="7.5" r="1.4" fill="#444" /><circle cx="2" cy="11.6" r="1.4" fill="#444" /></Svg>
        </PageActions>
      </Strip>
      <List>
        {pages.map((p, i) => (
          <PageRow key={p} $on={p === "servicios"} $odd={i % 2 === 0}><Doc stroke={p === "servicios" ? "#fff" : "#aaa"} />{p}</PageRow>
        ))}
      </List>
      <Plan>
        Free plan: 150/400 objects
        <PlanRow><Meter /><UpgradeBtn>Upgrade</UpgradeBtn></PlanRow>
      </Plan>
    </Pages>
  );
}

function Canvas() {
  return (
    <Stage>
      <RulerRow>
        <Corner />
        <HRuler><HCell $lead>0</HCell>{hTicks.map((t) => <HCell key={t}>{t}</HCell>)}</HRuler>
      </RulerRow>
      <StageBody>
        <VRuler><VCell $lead><VLabel>0</VLabel></VCell>{vTicks.map((t) => <VCell key={t}><VLabel>{t}</VLabel></VCell>)}<VCell /></VRuler>
        <ViewCol>
          <View>
            <Paper $x={349} $y={190} $w={961} $h={660} />
            <Frame $x={524} $y={208} $w={624} $h={48} />
            <Filled $x={552} $y={211} $w={106} $h={43}><Svg w={106} h={43}><svg x="40" y="12" width="27" height="19" viewBox="0 0 157 108"><path fill="#b2b2b2" d={mountainPath} /><circle cx="131" cy="26" r="25.3" fill="#b2b2b2" /></svg></Svg></Filled>
            <NavGroup $x={703} $y={213} $w={438} $h={39}>
              {["Bebidas", "Comidas", "Servicios", "Contacto"].map((t) => <NavCell key={t}>{t}</NavCell>)}
            </NavGroup>
            <Filled $x={524} $y={318} $w={627} $h={252} />
            <Item $x={759} $y={390} $w={157} $h={108}><Mountains w={157} h={108} /></Item>
            <Filled $x={694} $y={578} $w={114} $h={2} $bg="#1a7cf5" />
            <Filled $x={840} $y={578} $w={69} $h={2} $bg="#ccc" />
            <Filled $x={909} $y={578} $w={72} $h={2} $bg="#bababa" />
            <Thumb $x={805} $y={571} $w={38} $h={16} />
            <Copyable $x={556} $y={604} $w={100} $h={20}>Label text</Copyable>
            <Copyable $x={556} $y={629} $w={570} $h={40}>I just met this girl on the subway the other day. We exchanged contacts. Pretty sure<br />we had a nice conversation.</Copyable>
            <Filled $x={555} $y={715} $w={567} $h={1} $bg="#eee" />
            <Filled $x={516} $y={829} $w={627} $h={16} />
            <Floater $x={334} $y={807} $w={117} $h={37} $pad={12}><Minus size={11} strokeWidth={4} />50%<Plus size={11} strokeWidth={4} /></Floater>
            <Floater $x={458} $y={807} $w={72} $h={37} $pad={10}>
              <Svg w={14} h={16} stroke="#111" strokeWidth="1.9"><path d="M5 .5 1.5 4.5 5 8.5M2 4.5H7.5Q12.5 5 12.5 9.5 12 15 6 15" /></Svg>
              <Svg w={14} h={16} stroke="#aaa" strokeWidth="1.6"><path d="M9 .5 12.5 4.5 9 8.5M12 4.5H6.5Q1.5 5 1.5 9.5 2 15 8 15" /></Svg>
            </Floater>
            <Chat $x={1249} $y={813} $w={74} $h={30}>
              <Svg w={14} stroke={C.blue} strokeWidth="1.4"><path d="M2.5 1H11.5Q13.3 1 13.3 2.8V8.5Q13.3 10.3 11.5 10.3H4L.8 13V2.8Q.8 1 2.5 1Z" /><path d="M3.5 5.6H11" strokeDasharray="1.6 1.2" /></Svg>Chat
            </Chat>
          </View>
          <HScroll><Chev d="M6 1 2.5 4.5 6 8" /><Chev d="M3 1 6.5 4.5 3 8" /></HScroll>
        </ViewCol>
        <VScroll><Chev d="M1 6 4.5 2.5 8 6" /><Chev d="M1 3 4.5 6.5 8 3" /></VScroll>
      </StageBody>
    </Stage>
  );
}

function SettingsPanel() {
  return (
    <Panel>
      <PanelHead $h={24}>PAGE SETTINGS</PanelHead>
      <PanelBody $h={207}>
        <Field $w={233} $h={28} $pl={5} $gap={9}>
          <Svg w={11} h={13} stroke="#777"><path d="M1.5.6H7L10.4 4V12.4H.6V1.5Z" /><path d="M4.5 6.5 3 8 4.5 9.5M6.5 6.5 8 8 6.5 9.5" /></Svg>
          <FieldText>Android Large</FieldText><Drop $bare $pt={10} />
        </Field>
        <SizeGrid>
          <Stack $gap={10}>
            <Field $w={91} $h={25} $pl={4} $gap={6}><MoveHorizontal size={12} color="#666" /><FieldText>1920</FieldText></Field>
            <Field $w={91} $h={25} $pl={4} $gap={6}><MoveVertical size={12} color="#666" /><FieldText>2230</FieldText></Field>
          </Stack>
          <LinkCol>
            <Svg w={22} h={36}><path d="M0 .5H11Q13.5.5 13.5 3V9M0 34.5H13.5V29" stroke="#ddd" /><svg x="9" y="12" width="11" height="14" viewBox="0 0 13 15"><path d="M3.6 4.8V4.2a2.9 2.9 0 0 1 5.8 0V7" stroke="#777" strokeWidth="1.8" /><rect y="6.5" width="13" height="8.5" rx="1" fill="#777" /><circle cx="6.5" cy="10.7" r="1.2" fill="#fff" /></svg></Svg>
          </LinkCol>
          <Stack $gap={6}>
            <Orient>
              <OrientBtn $on><Svg w={12} h={15} stroke="#777" strokeWidth="1.3"><path d="M2 1H7.5L11 4.5V13Q11 14 10 14H2Q1 14 1 13V2Q1 1 2 1ZM7.5 1V4.5H11" /></Svg></OrientBtn>
              <OrientBtn><Svg w={16} h={12} stroke="#888" strokeWidth="1.4"><path d="M2 1H11L15 5V10Q15 11 14 11H2Q1 11 1 10V2Q1 1 2 1ZM11 1V5H15" /></Svg></OrientBtn>
            </Orient>
            <Field $w={93} $h={26} $pl={4} $gap={4}>
              <Svg w={15} h={15}><path d="M6.5 1.5 11 6 6 10.5 1.5 6Z" fill="#666" /><path d="M5 0 7 3" stroke="#666" /><path d="M12.5 6.5 14 9.5H11Z" fill="#666" /><rect y="12.5" width="15" height="2.5" fill="#c0b8b4" /></Svg>
              <Inner />
            </Field>
          </Stack>
        </SizeGrid>
        <Link $mt={8}>Fit page to content...</Link>
        <Link $mt={11}>Reset page view</Link>
        <CheckRow $mt={11}><Check $c="#808080"><BoxMark />Hide content outside page borders</Check></CheckRow>
      </PanelBody>
      <PanelHead $h={25} $top $ls={-0.16}>DEFAULT TEXT SETTINGS</PanelHead>
      <PanelBody $h={122}>
        <FieldRow>
          <Field $w={145} $pl={5} $c="#999"><FieldText>Font family</FieldText><Drop $pt={6} /></Field>
          <Field $w={82} $pl={5}><FieldText $fs={10}>None</FieldText><Drop $pt={6} /></Field>
        </FieldRow>
        <FieldRow $mt={6}>
          <Field $w={113} $pl={8} $gap={8} $c="#777"><FieldText $fixed $fs={12}>A</FieldText><Inner>?</Inner></Field>
          <Field $w={113} $pl={3} $gap={5} $c="#999">
            <Svg w={11} h={10}><path d="M0 3H5V4.5H3.5V9H2V4.5H0ZM4 0H11V2H8.5V9H6.5V2H4Z" fill="#777" /></Svg>
            <FieldText>Not set</FieldText><FieldText $fixed $fs={9}>PX</FieldText><Drop $pt={6} />
          </Field>
        </FieldRow>
        <Link $mt={9}>Reset defaults</Link>
      </PanelBody>
      <PanelHead $h={26} $top $pb={1} $ls={-0.25}>REPLACE COLORS</PanelHead>
      <PanelBody $h={300}>
        <Tabs><PTab $on>Current Page</PTab><PTab>Entire Project</PTab></Tabs>
        <CheckRow $mt={18}>
          <Check><BoxMark />Fills</Check>
          <Check><BoxMark />Strokes</Check>
          <Check $ls={-0.08}><BoxMark><Svg w={11} stroke="#333" strokeWidth="1.4"><path d="M1.5 5.5 4.5 8.5 9.5 2" /></Svg></BoxMark>Text Color</Check>
        </CheckRow>
        <Swatches>{swatches.map((s, i) => <Swatch key={i} {...s} $h={i > 9 ? 20 : 21} />)}</Swatches>
        <Hint>Click on any color above to replace it on<br />the current page</Hint>
      </PanelBody>
    </Panel>
  );
}

function WindowsTaskbar() {
  return (
    <Taskbar>
      <Start><FaWindows size={17} /></Start>
      <SearchBar>
        <Svg w={17} h={17} stroke="#222" strokeWidth="1.3"><circle cx="10.5" cy="6" r="5.2" /><path d="M7 10 1 16" /></Svg>
        <SearchText>Buscar</SearchText>{tower}
      </SearchBar>
      <TaskView><Svg w={17} h={18} stroke="#fff" strokeWidth="1.2"><path d="M1 0V3H11V0M1 18V15H11V18M.6 5.5H11.4V12.5H.6ZM15 2V6M15 10V17M13.5 7H17" /></Svg></TaskView>
      <TaskApp $on><Opera s={24} c="#e0244e" /></TaskApp>
      <TaskApp>{folder}</TaskApp>
      <TaskApp>
        <Svg w={24}><circle cx="12" cy="12" r="12" fill="#5666f2" /><svg x="4" y="4" width="16" height="16"><FaDiscord size={16} color="#fff" /></svg></Svg>
        <Badge $r={10} $b={6} $s={14} $fs={9.5} $bg="#ee4f56">9+</Badge>
      </TaskApp>
      <TaskApp>{chromeI}</TaskApp>
      <TaskApp>{ppt}</TaskApp>
      <TaskApp>{steam}</TaskApp>
      <TaskApp>{vscode}</TaskApp>
      <TaskApp>
        <Svg w={25}><path d="M12.5 0A12.5 12.5 0 1 1 6.5 23.5L0 25 1.7 19A12.5 12.5 0 0 1 12.5 0Z" fill="#fff" /><path d="M12.5 2A10.5 10.5 0 1 1 7 21.5L3 22.5 4 18.5A10.5 10.5 0 0 1 12.5 2Z" fill="#2bc552" /><path d="M8.5 7Q7 8.5 8 11 10 16 15 18 18 18.5 18.5 15.5L16 14 14.5 15.5Q11.5 14 10 11L11 9.5 10 7Z" fill="#fff" /></Svg>
        <Badge $r={3} $b={4} $s={18} $fs={11} $bg="#262727" $ring>24</Badge>
      </TaskApp>
      <TaskApp>{ps}</TaskApp>
      <TaskApp>{paint}</TaskApp>
      <Tray>
        <Svg w={22} h={24}><circle cx="10" cy="13" r="10" fill="#f5901e" /><circle cx="18.5" cy="3.5" r="3.2" fill="#c72a1c" /><path d="M11 19Q8 19 8 16 9 13 12 13.5 15 9 18.5 12.5 22 13 22 17 21 19 19 19Z" fill="#bcd3f5" /></Svg>
        <Weather><span>21°C</span><span>Mayorm. soleado</span></Weather>
        <TraySlot $w={24}><ChevronUp size={18} strokeWidth={1.6} /></TraySlot>
        <TraySlot $w={24}><Svg w={17} h={11}><path d="M4 11Q0 11 0 7.5 1 4.5 4 4.5 5.5 0 10 1 13 2 13.5 4.5 17 5 17 8 16 11 13.5 11Z" fill="#e8e8e8" /></Svg></TraySlot>
        <TraySlot $w={24}><Svg w={17} h={14} stroke="#fff" strokeWidth="1.2"><path d="M5 2H16V10H4V6M10 10V13M7 13.4H14M.6.6H4.4V4.4H.6Z" /></Svg></TraySlot>
        <TraySlot $w={24}><Svg w={17} h={14} stroke="#fff" strokeWidth="1.1"><path d="M.6 5H3L6.5 1.5V12.5L3 9H.6ZM9 5Q10.5 7 9 9M11.5 3Q14 7 11.5 11M14 1Q18 7 14 13" /></Svg></TraySlot>
        <TraySlot $w={34} $ls={-0.5}>ESP</TraySlot>
        <ClockText>14:21<br />10/5/2023</ClockText>
        <Notice>
          <Svg w={17} h={18}><path d="M0 0H16V12H9L5 16V12H0Z" fill="#fff" /><path d="M2.5 3H13.5M2.5 6H13.5M2.5 9H9" stroke="#333" /></Svg>
          <Badge $r={18} $b={4} $s={16} $fs={10} $bg="#333" $ring>7</Badge>
        </Notice>
      </Tray>
    </Taskbar>
  );
}

export default function App() {
  return (
    <Desktop>
      <Global />
      <Browser>
        <Rail>{railItems.map(([h, icon, gap], i) => <RailSlot key={i} $h={h} $gap={gap}>{icon}</RailSlot>)}</Rail>
        <Win>
          <BrowserTop />
          <AppShell>
            <AppHeader />
            <Body>
              <Toolbox>
                <AddSlot><Svg w={22}><circle cx="11" cy="11" r="11" fill={C.blue} /><path d="M11 6V16M6 11H16" stroke="#fff" strokeWidth="2" /></Svg></AddSlot>
                {toolbox.map(([t, icon, on]) => (
                  <ToolboxItem key={t} $on={on}><ToolboxIcon $on={on}>{icon}</ToolboxIcon><ToolboxLabel>{t}</ToolboxLabel></ToolboxItem>
                ))}
                <ToolboxFoot>
                  {gear(22, "#444", "#f8f8f8")}
                  <Help>?</Help>
                  <Svg w={30}><circle cx="15" cy="15" r="15" fill="#c4c4c4" /><circle cx="15" cy="12" r="6.5" fill="#fff" /><path d="M4.5 25.5Q6 18 12 17.5H18Q24 18 25.5 25.5 21 30 15 30 9 30 4.5 25.5Z" fill="#fff" /></Svg>
                </ToolboxFoot>
              </Toolbox>
              <PagesPanel />
              <Canvas />
              <SettingsPanel />
            </Body>
          </AppShell>
        </Win>
      </Browser>
      <WindowsTaskbar />
    </Desktop>
  );
}
